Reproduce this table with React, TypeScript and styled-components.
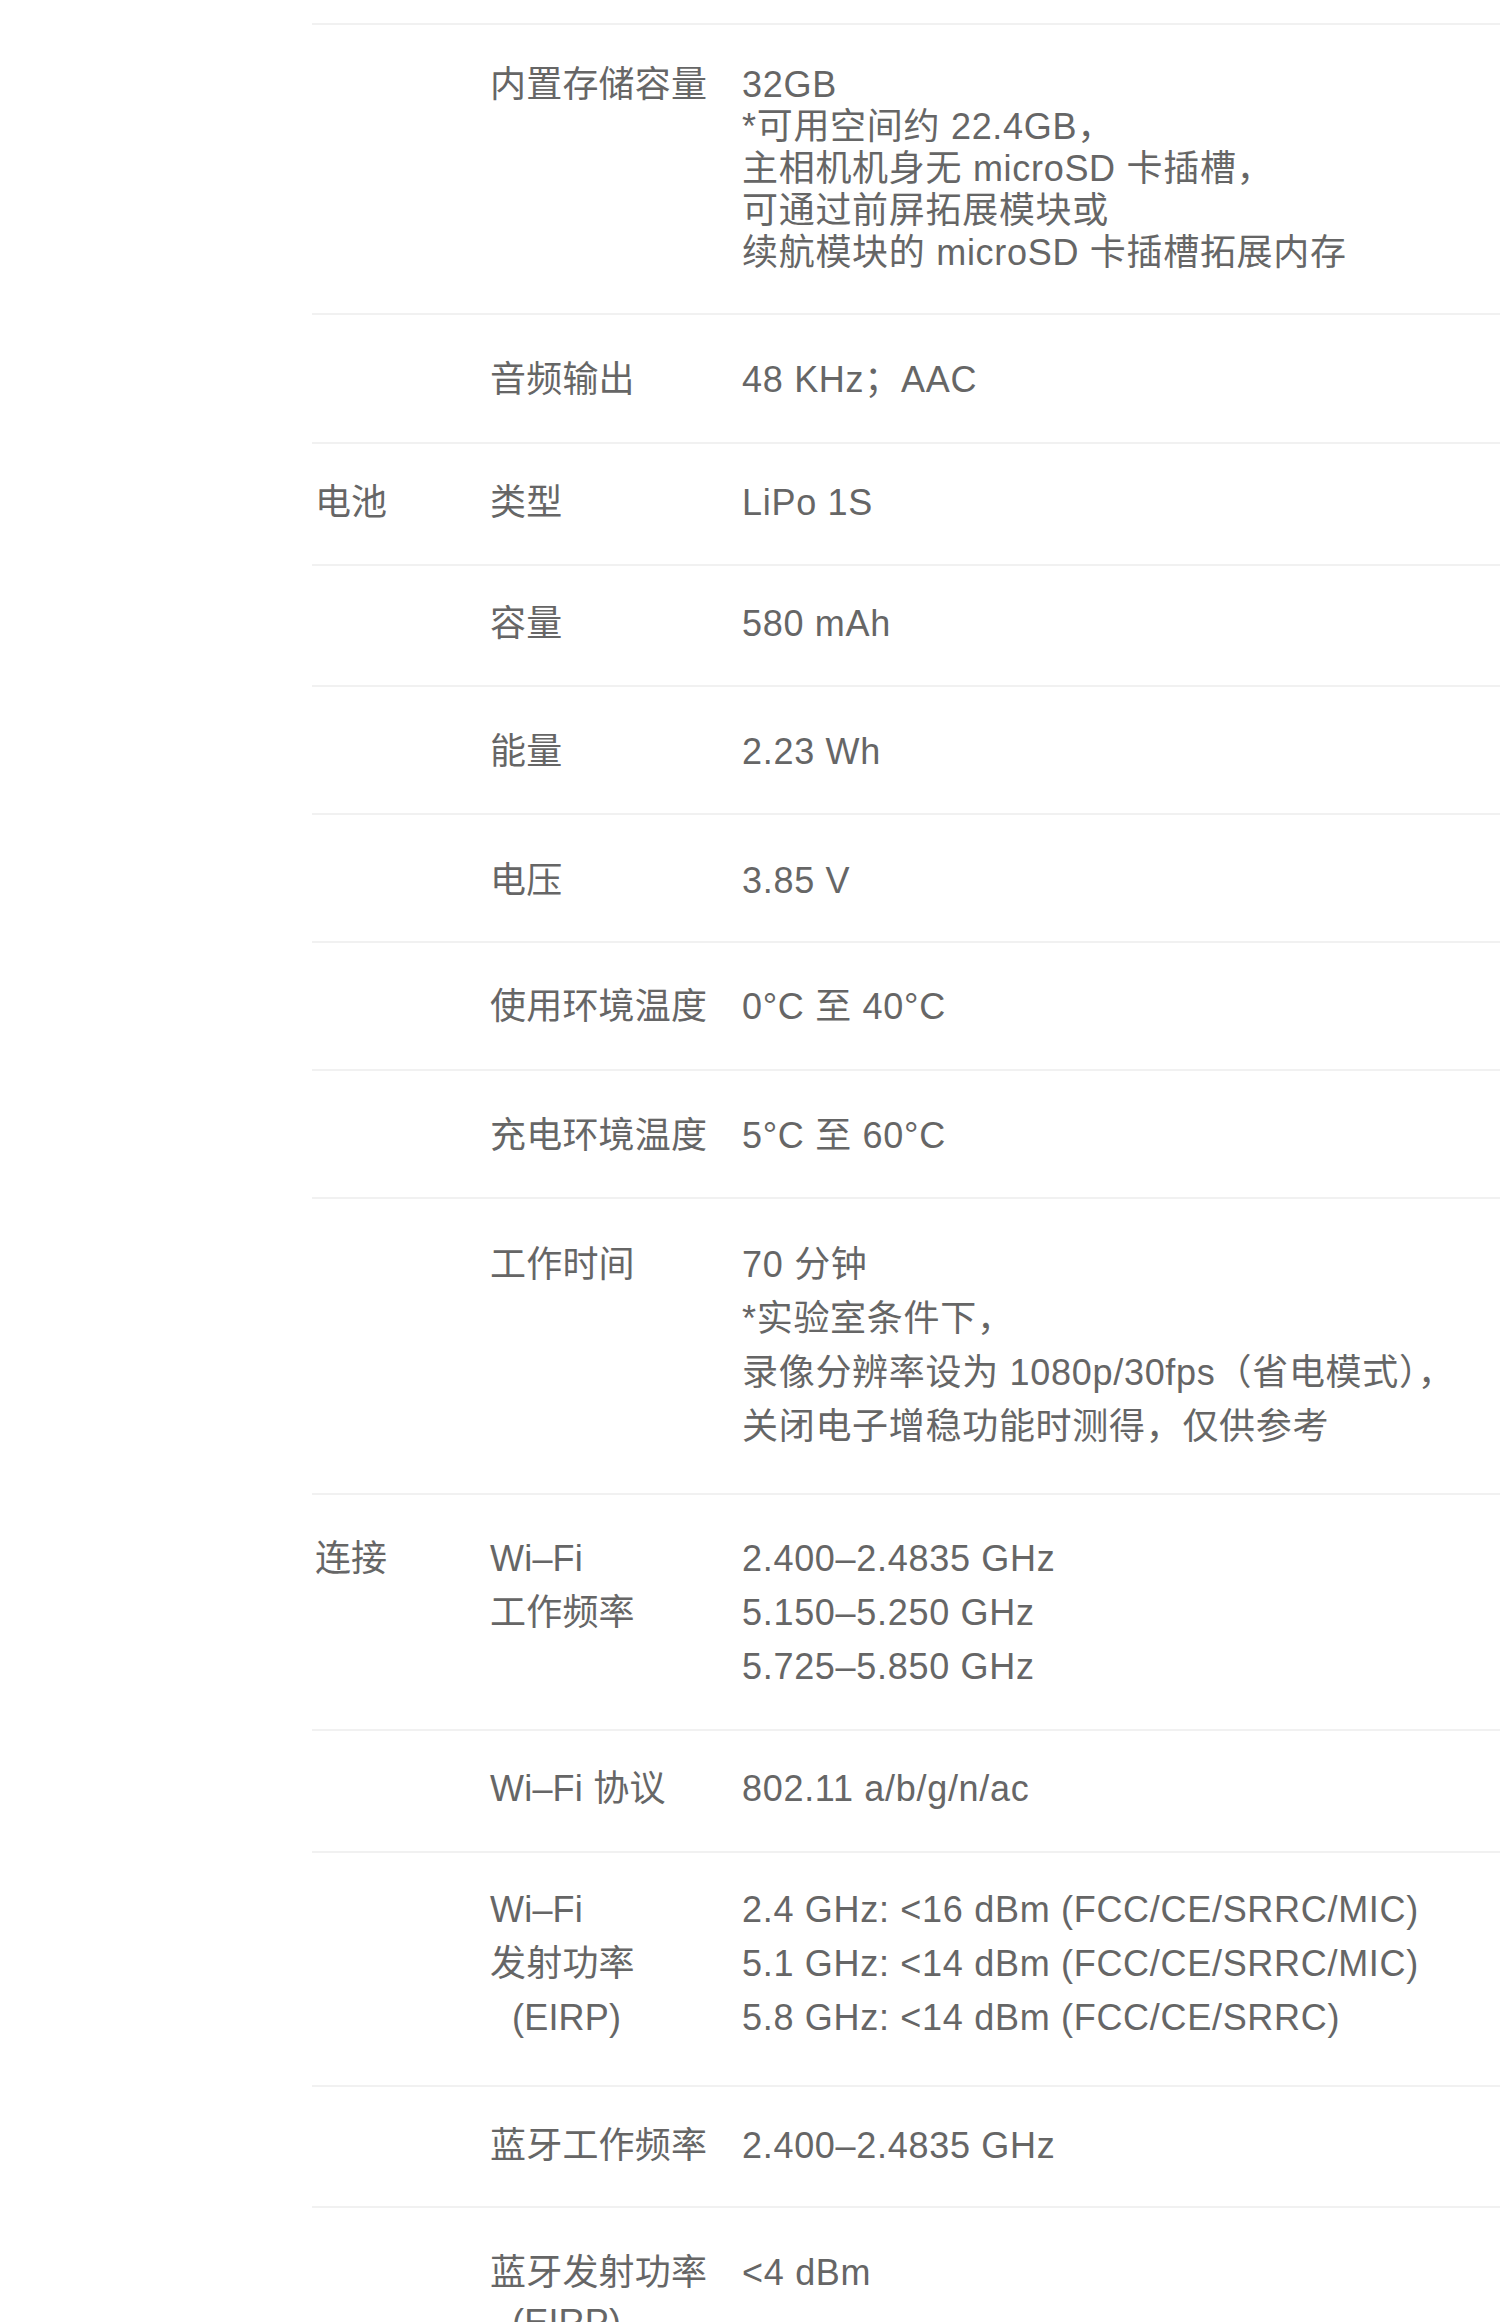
import * as React from "react";
import styled, { createGlobalStyle } from "styled-components";

const GlobalStyle = createGlobalStyle`
  html, body {
    margin: 0;
    padding: 0;
    background: #fff;
  }
  body {
    font-family: "Liberation Sans", "Noto Sans CJK SC", sans-serif;
    color: #666666;
  }
`;

interface SpecRow {
  group?: string;
  label: string[];
  value: string[];
  lh: number;
  pt: number;
  pb: number;
}

// lines starting with "(" get the small indent of a full-width bracket
const rows: SpecRow[] = [
  {
    label: ["内置存储容量"],
    value: [
      "32GB",
      "*可用空间约 22.4GB，",
      "主相机机身无 microSD 卡插槽，",
      "可通过前屏拓展模块或",
      "续航模块的 microSD 卡插槽拓展内存",
    ],
    lh: 42,
    pt: 39,
    pb: 39,
  },
  { label: ["音频输出"], value: ["48 KHz；AAC"], lh: 42, pt: 44, pb: 41 },
  { group: "电池", label: ["类型"], value: ["LiPo 1S"], lh: 42, pt: 38, pb: 40 },
  { label: ["容量"], value: ["580 mAh"], lh: 42, pt: 37, pb: 40 },
  { label: ["能量"], value: ["2.23 Wh"], lh: 42, pt: 44, pb: 40 },
  { label: ["电压"], value: ["3.85 V"], lh: 42, pt: 45, pb: 39 },
  { label: ["使用环境温度"], value: ["0°C 至 40°C"], lh: 42, pt: 43, pb: 41 },
  { label: ["充电环境温度"], value: ["5°C 至 60°C"], lh: 42, pt: 44, pb: 40 },
  {
    label: ["工作时间"],
    value: [
      "70 分钟",
      "*实验室条件下，",
      "录像分辨率设为 1080p/30fps（省电模式），",
      "关闭电子增稳功能时测得，仅供参考",
    ],
    lh: 54,
    pt: 39,
    pb: 39,
  },
  {
    group: "连接",
    label: ["Wi–Fi", "工作频率"],
    value: ["2.400–2.4835 GHz", "5.150–5.250 GHz", "5.725–5.850 GHz"],
    lh: 54,
    pt: 37,
    pb: 35,
  },
  { label: ["Wi–Fi 协议"], value: ["802.11 a/b/g/n/ac"], lh: 42, pt: 37, pb: 41 },
  {
    label: ["Wi–Fi", "发射功率", "(EIRP)"],
    value: [
      "2.4 GHz: <16 dBm (FCC/CE/SRRC/MIC)",
      "5.1 GHz: <14 dBm (FCC/CE/SRRC/MIC)",
      "5.8 GHz: <14 dBm (FCC/CE/SRRC)",
    ],
    lh: 54,
    pt: 30,
    pb: 40,
  },
  { label: ["蓝牙工作频率"], value: ["2.400–2.4835 GHz"], lh: 42, pt: 38, pb: 39 },
  { label: ["蓝牙发射功率", "(EIRP)"], value: ["<4 dBm"], lh: 50, pt: 40, pb: 40 },
];

const Page = styled.div`
  padding: 23px 0 0 312px;
  min-height: 2322px;
  box-sizing: border-box;
`;

const Table = styled.div`
  display: flex;
  flex-direction: column;
`;

const Row = styled.div<{ $lh: number; $pt: number; $pb: number }>`
  display: grid;
  grid-template-columns: 178px 252px 1fr;
  border-top: 2px solid #f1f1f1;
  padding: ${(p) => p.$pt}px 0 ${(p) => p.$pb}px;
  font-size: 36px;
  line-height: ${(p) => p.$lh}px;
`;

const Group = styled.div`
  padding-left: 3px;
  white-space: nowrap;
`;

const Label = styled.div`
  white-space: nowrap;
  letter-spacing: 0.2px;
`;

const Value = styled.div`
  white-space: nowrap;
  letter-spacing: 0.7px;
`;

const Line = styled.div<{ $indent?: boolean }>`
  display: block;
  padding-left: ${(p) => (p.$indent ? "22px" : "0")};
`;

export default function App() {
  return (
    <>
      <GlobalStyle />
      <Page>
        <Table>
          {rows.map((r, i) => (
            <Row key={i} $lh={r.lh} $pt={r.pt} $pb={r.pb}>
              <Group>{r.group}</Group>
              <Label>
                {r.label.map((t, j) => (
                  <Line key={j} $indent={t.startsWith("(")}>
                    {t}
                  </Line>
                ))}
              </Label>
              <Value>
                {r.value.map((t, j) => (
                  <Line key={j}>{t}</Line>
                ))}
              </Value>
            </Row>
          ))}
        </Table>
      </Page>
    </>
  );
}
